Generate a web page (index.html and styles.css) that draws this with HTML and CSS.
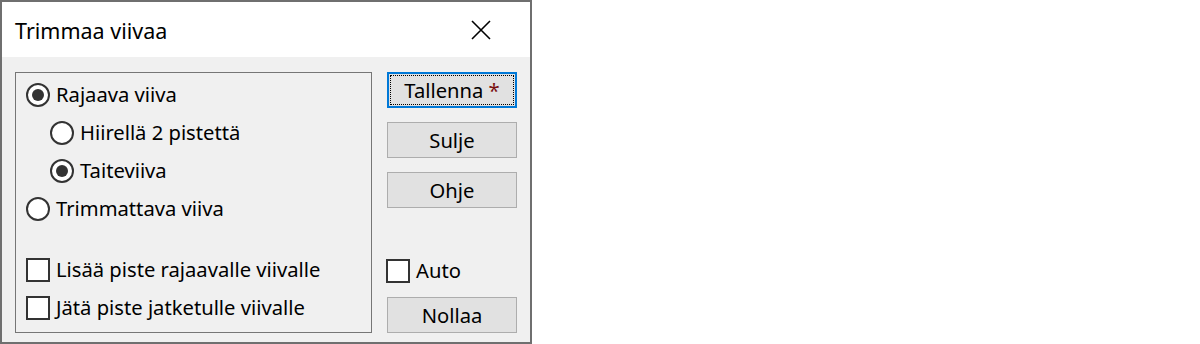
FILE: index.html
```html
<!DOCTYPE html>
<html lang="fi">
<head>
<meta charset="utf-8">
<title>Trimmaa viivaa</title>
<link rel="stylesheet" href="styles.css">
</head>
<body>
<div class="dialog">
  <div class="titlebar">
    <span class="title">Trimmaa viivaa</span>
    <svg class="close" width="20" height="20" viewBox="0 0 20 20" aria-hidden="true">
      <path d="M1 1 L19 19 M19 1 L1 19" stroke="#000" stroke-width="1.6" fill="none"/>
    </svg>
  </div>
  <div class="client">
    <div class="group">
      <div class="row"><span class="radio checked"></span><span class="label">Rajaava viiva</span></div>
      <div class="row sub"><span class="radio"></span><span class="label">Hiirellä 2 pistettä</span></div>
      <div class="row sub"><span class="radio checked"></span><span class="label">Taiteviiva</span></div>
      <div class="row"><span class="radio"></span><span class="label">Trimmattava viiva</span></div>
      <div class="spacer"></div>
      <div class="row"><span class="check"></span><span class="label">Lisää piste rajaavalle viivalle</span></div>
      <div class="row"><span class="check"></span><span class="label">Jätä piste jatketulle viivalle</span></div>
    </div>
    <div class="side">
      <button class="btn default"><span class="focus"><span>Tallenna&nbsp;<span class="star">*</span></span></span></button>
      <button class="btn">Sulje</button>
      <button class="btn">Ohje</button>
      <div class="side-fill"></div>
      <div class="row auto"><span class="check"></span><span class="label">Auto</span></div>
      <button class="btn last">Nollaa</button>
    </div>
  </div>
</div>
</body>
</html>
```
FILE: styles.css
```css
html, body {
  margin: 0;
  padding: 0;
  background: #ffffff;
}
body {
  width: 1200px;
  height: 344px;
  font-family: "Noto Sans", "Open Sans", "Liberation Sans", sans-serif;
  color: #000;
}
.dialog {
  width: 532px;
  height: 344px;
  box-sizing: border-box;
  border: 2px solid #6f6f6f;
  display: flex;
  flex-direction: column;
  background: #f0f0f0;
}
.titlebar {
  height: 55px;
  background: #ffffff;
  display: flex;
  align-items: center;
  justify-content: space-between;
  padding: 0 39px 0 13px;
  flex: none;
}
.title {
  font-size: 21.5px;
  position: relative;
  top: 1px;
}
.close {
  display: block;
}
.client {
  flex: 1;
  display: flex;
  padding: 15px 13px 9px 13px;
  gap: 14px;
}
.group {
  width: 357px;
  box-sizing: border-box;
  border: 1px solid #767676;
  padding: 3px 0 5px 10px;
  display: flex;
  flex-direction: column;
}
.row {
  height: 38px;
  display: flex;
  align-items: center;
  gap: 6px;
  font-size: 20.2px;
}
.row.sub {
  padding-left: 24px;
}
.spacer {
  height: 23px;
}
.radio {
  width: 24px;
  height: 24px;
  box-sizing: border-box;
  border: 2px solid #333;
  border-radius: 50%;
  background: #fff;
  position: relative;
  flex: none;
}
.radio.checked::after {
  content: "";
  position: absolute;
  left: 4px;
  top: 4px;
  width: 12px;
  height: 12px;
  border-radius: 50%;
  background: #333;
}
.check {
  width: 24px;
  height: 24px;
  box-sizing: border-box;
  border: 2px solid #333;
  background: #fff;
  flex: none;
}
.label {
  white-space: nowrap;
  position: relative;
  top: -1px;
}
.side {
  width: 131px;
  display: flex;
  flex-direction: column;
  align-items: flex-end;
}
.btn {
  width: 130px;
  height: 36px;
  box-sizing: border-box;
  border: 1px solid #adadad;
  background: #e1e1e1;
  font-family: inherit;
  font-size: 20.2px;
  color: #000;
  padding: 0;
  margin: 0 0 14px 0;
  display: flex;
  align-items: center;
  justify-content: center;
}
.btn.default {
  border: 2px solid #0078d7;
  padding: 1px;
}
.focus {
  flex: 1;
  align-self: stretch;
  border: 1px dotted #000;
  display: flex;
  align-items: center;
  justify-content: center;
}
.star {
  color: #7a1010;
}
.side-fill {
  flex: 1;
}
.row.auto {
  width: 131px;
  height: 24px;
  margin-bottom: 14px;
}
.btn.last {
  margin-bottom: 0;
}
```
